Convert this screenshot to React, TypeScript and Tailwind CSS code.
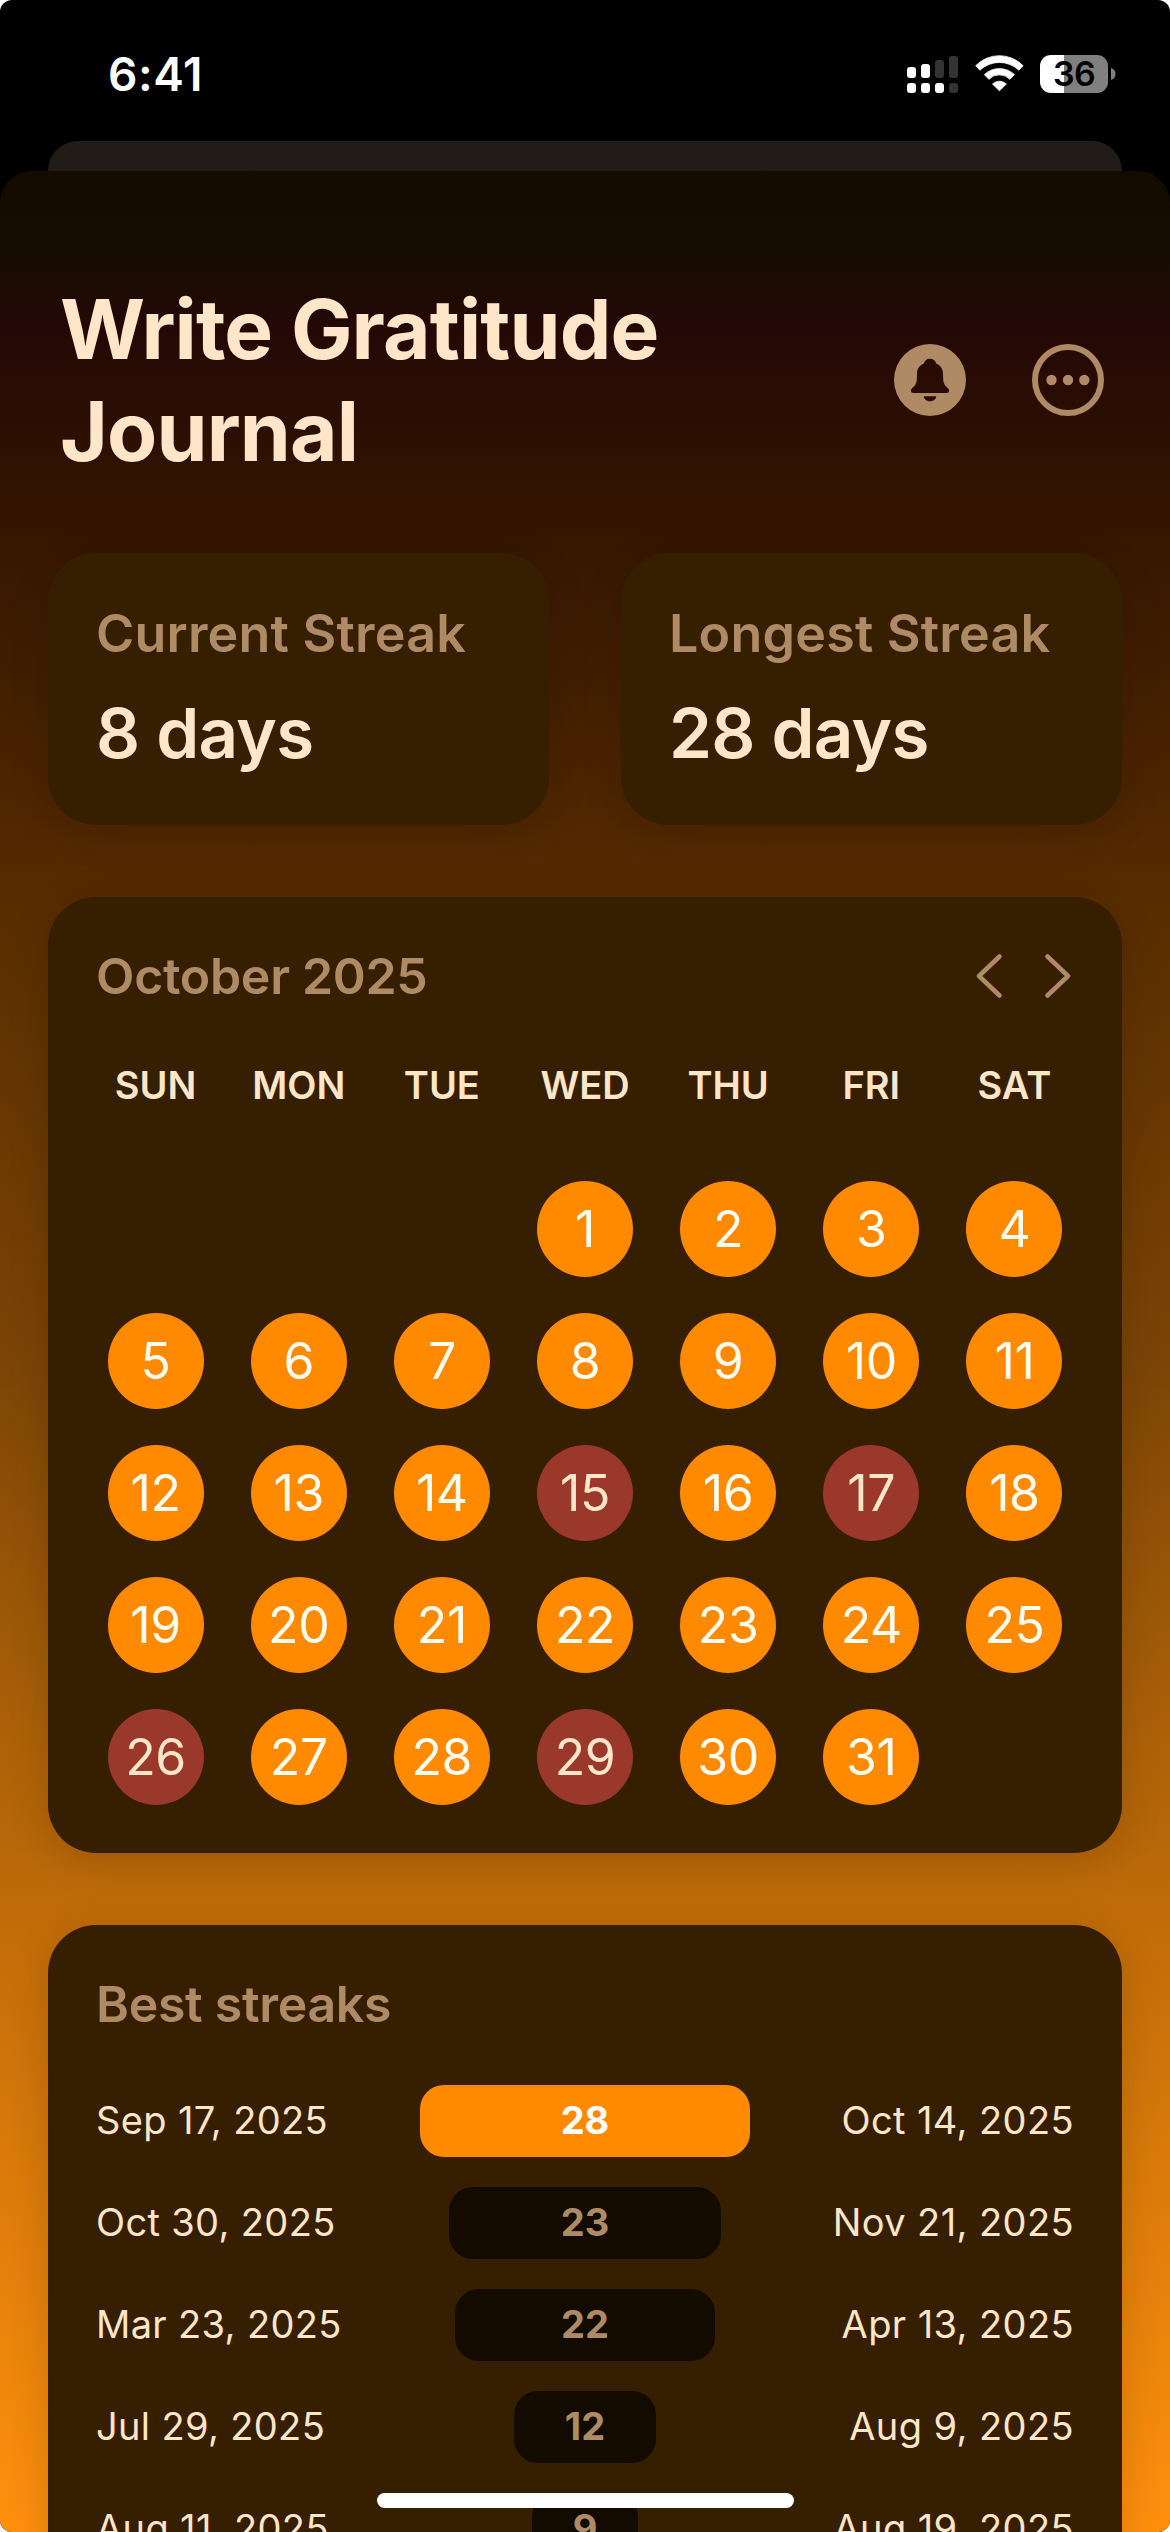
import clsx from "clsx";

const WEEKDAYS = ["SUN", "MON", "TUE", "WED", "THU", "FRI", "SAT"];
const DAYS = Array.from({ length: 31 }, (_, i) => i + 1);
const MISSED = [15, 17, 26, 29];

const STREAKS = [
    { from: "Sep 17, 2025", to: "Oct 14, 2025", days: 28, width: 330 },
    { from: "Oct 30, 2025", to: "Nov 21, 2025", days: 23, width: 272 },
    { from: "Mar 23, 2025", to: "Apr 13, 2025", days: 22, width: 260 },
    { from: "Jul 29, 2025", to: "Aug 9, 2025", days: 12, width: 142 },
    { from: "Aug 11, 2025", to: "Aug 19, 2025", days: 9, width: 106 },
];

function SignalIcon() {
    return (
        <svg width="51" height="38" viewBox="0 0 51 38" fill="#fff">
            <rect x="0" y="12" width="9" height="11" rx="3" />
            <rect x="14" y="9" width="9" height="14" rx="3" />
            <rect x="28" y="5" width="9" height="18" rx="3" fill="#333" />
            <rect x="42" y="1" width="9" height="22" rx="3" fill="#333" />
            <rect x="0" y="28" width="9" height="10" rx="3" />
            <rect x="14" y="28" width="9" height="10" rx="3" />
            <rect x="28" y="28" width="9" height="10" rx="3" />
            <rect x="42" y="28" width="9" height="10" rx="3" fill="#333" />
        </svg>
    );
}

function WifiIcon() {
    return (
        <svg width="49" height="38" viewBox="0 0 49 38" fill="#fff" stroke="#fff" strokeWidth="0.8" strokeLinejoin="round">
            <path d="M.7 10.7A33 33 0 0 1 48.1 10.7L43.9 15.2A28.4 28.4 0 0 0 4.9 15.2Z" />
            <path d="M9.3 19.6A22 22 0 0 1 39.5 19.6L34.9 24.3A14.6 14.6 0 0 0 13.9 24.3Z" />
            <path d="M17.5 29A10 10 0 0 1 31.3 29L24.4 35.8Z" />
        </svg>
    );
}

function Battery() {
    return (
        <div className="flex items-center gap-[3px]">
            <div className="flex h-[38px] w-[68px] items-center justify-center rounded-[11px] bg-[linear-gradient(90deg,#fff_24px,#808080_24px)] text-[34px] leading-none font-semibold tracking-[-0.8px] text-black">
                36
            </div>
            <svg width="5" height="12" viewBox="0 0 5 12" fill="#808080">
                <path d="M0 0Q4.5 1.5 4.5 6T0 12Z" />
            </svg>
        </div>
    );
}

function BellIcon() {
    return (
        <svg width="72" height="72" viewBox="0 0 72 72" fill="#ae8b64" fillRule="evenodd">
            <path d="M36 0a36 36 0 1 0 0 72a36 36 0 1 0 0-72ZM36 14.8c-3.2 0-5.3 1.8-6.2 4.6C26 21 23.3 24.3 23.1 28.8l-.3 6.4c-.2 4-1.6 6.2-4 8.2-1.4 1.2-1.9 2.3-1.9 3.4 0 1.4 1 2.2 2.7 2.2h32.8c1.7 0 2.7-.8 2.7-2.2 0-1.1-.5-2.2-1.9-3.4-2.4-2-3.8-4.2-4-8.2l-.3-6.4c-.2-4.5-2.9-7.8-6.7-9.4C41.3 16.6 39.2 14.8 36 14.8ZM29.8 52.3h12.4c0 2.8-2.6 5-6.2 5s-6.2-2.2-6.2-5Z" />
        </svg>
    );
}

function MoreIcon() {
    return (
        <svg width="72" height="72" viewBox="0 0 72 72" fill="#ae8b64">
            <circle cx="36" cy="36" r="33" fill="none" stroke="#ae8b64" strokeWidth="6" />
            <circle cx="19.5" cy="36" r="5.2" />
            <circle cx="36" cy="36" r="5.2" />
            <circle cx="52.3" cy="36" r="5.2" />
        </svg>
    );
}

function Chevron({ d }: { d: string }) {
    return (
        <svg width="26" height="44" viewBox="0 0 26 44" fill="none" stroke="#ae8b64" strokeWidth="4.5" strokeLinecap="round" strokeLinejoin="round">
            <path d={d} />
        </svg>
    );
}

function StatCard({ label, value }: { label: string; value: string }) {
    return (
        <div className="h-[272px] flex-1 rounded-[48px] bg-[#361e00] px-12 pt-[49px] shadow-[0_8px_40px_rgba(0,0,0,0.13)]">
            <div className="text-[52px] leading-[64px] font-[560] tracking-[0.2px] text-[#ae8b64]">{label}</div>
            <div className="mt-[25px] text-[69px] leading-[84px] font-semibold tracking-[-0.7px] text-[#ffe6c9]">{value}</div>
        </div>
    );
}

export default function App() {
    return (
        <div className="relative h-[2532px] w-[1170px] overflow-hidden rounded-[12px] bg-black font-['Inter',sans-serif]">
            {/* Status bar */}
            <div className="flex h-[141px] items-start justify-between pt-[55px] pr-[54px] pl-[108px]">
                <div className="-mt-px text-[46px] leading-[40px] font-semibold tracking-[0.6px] text-white">6:41</div>
                <div className="flex items-center">
                    <SignalIcon />
                    <div className="mr-4 ml-[17px]">
                        <WifiIcon />
                    </div>
                    <Battery />
                </div>
            </div>

            {/* Sheet underneath */}
            <div className="mx-12 h-[30px] rounded-t-[30px] bg-[#211c17]"></div>

            <div className="h-[2361px] overflow-hidden rounded-t-[32px] bg-[linear-gradient(180deg,#140b00_0px,#170e03_80px,#240805_160px,#280c04_215px,#341600_349px,#452000_540px,#582d00_740px,#7d4506_1200px,#ac6108_1560px,#d0740a_1890px,#ff900d_2361px)] px-12">
                <div className="flex h-[382px] items-start justify-between pt-[108px] pr-[18px] pl-3">
                    <h1 className="text-[82px] leading-[102px] font-bold tracking-[-0.85px] text-[#ffe6c9]">
                        Write Gratitude
                        <br />
                        Journal
                    </h1>
                    <div className="mt-[65px] flex gap-[66px]">
                        <BellIcon />
                        <MoreIcon />
                    </div>
                </div>

                <div className="flex gap-[72px]">
                    <StatCard label="Current Streak" value="8 days" />
                    <StatCard label="Longest Streak" value="28 days" />
                </div>

                {/* Calendar */}
                <div className="mt-[72px] h-[956px] rounded-[48px] bg-[#361e00] px-12 pt-[48px] shadow-[0_8px_40px_rgba(0,0,0,0.16)]">
                    <div className="flex items-center justify-between">
                        <div className="text-[50px] leading-[62px] font-[560] tracking-[-0.3px] text-[#ae8b64]">October 2025</div>
                        <div className="flex gap-[43px] pr-[3px]">
                            <Chevron d="M23.5 2.5L3 22L23.5 41.5" />
                            <Chevron d="M2.5 2.5L23 22L2.5 41.5" />
                        </div>
                    </div>
                    <div className="mt-[54px] grid grid-cols-7 gap-x-6 text-center text-[38px] leading-[48px] font-[560] text-[#ffe6c9]">
                        {WEEKDAYS.map((day) => (
                            <div key={day}>{day}</div>
                        ))}
                    </div>
                    <div className="mt-[72px] grid grid-cols-7 justify-items-center gap-x-6 gap-y-9">
                        {DAYS.map((day) => (
                            <div
                                key={day}
                                className={clsx(
                                    "flex h-24 w-24 items-center justify-center rounded-full text-[50px] leading-none tracking-[-0.4px]",
                                    day === 1 && "col-start-4",
                                    MISSED.includes(day) ? "bg-[#9a392b] text-[#ffe6c9]" : "bg-[#ff8a00] text-[#fffdf2]"
                                )}
                            >
                                {day}
                            </div>
                        ))}
                    </div>
                </div>

                {/* Best streaks */}
                <div className="mt-[72px] h-[760px] rounded-[48px] bg-[#361e00] px-12 pt-[48px] shadow-[0_8px_40px_rgba(0,0,0,0.16)]">
                    <div className="text-[50px] leading-[62px] font-[560] tracking-[-0.3px] text-[#ae8b64]">Best streaks</div>
                    <div className="mt-[50px] flex flex-col gap-[30px] text-[38px] leading-[46px] text-[#ffe6c9]">
                        {STREAKS.map((streak, i) => (
                            <div key={streak.from} className="flex h-[72px] items-center">
                                <div className="flex-1 pb-0.5 tracking-[0.35px]">{streak.from}</div>
                                <div
                                    className={clsx(
                                        "flex h-[72px] items-center justify-center rounded-[24px] pb-0.5 font-bold",
                                        i === 0 ? "bg-[#ff8a00] text-white" : "bg-[#140b00] text-[#ae8b64]"
                                    )}
                                    style={{ width: streak.width }}
                                >
                                    {streak.days}
                                </div>
                                <div className="flex-1 pb-0.5 text-right tracking-[0.4px]">{streak.to}</div>
                            </div>
                        ))}
                    </div>
                </div>
            </div>

            {/* Home indicator */}
            <div className="absolute bottom-6 left-[377px] h-[15px] w-[417px] rounded-full bg-white"></div>
        </div>
    );
}
